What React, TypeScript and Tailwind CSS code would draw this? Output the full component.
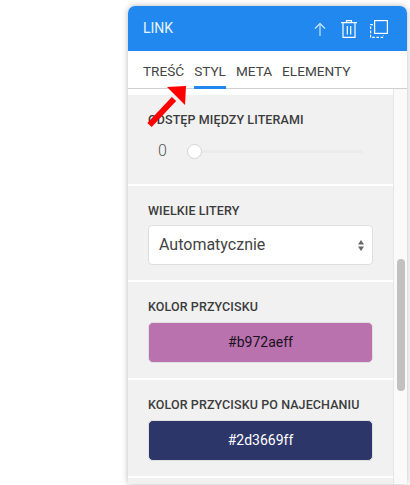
const labelClass = "text-[12.5px] leading-[14px] font-medium text-[#3c3c3c] tracking-[0.1px]";

function ArrowAnnotation() {
    return (
        <svg className="absolute left-[144px] top-[84px]" width="46" height="46" viewBox="0 0 46 46">
            <path d="M5.5 41 L30 15" stroke="#ff0000" strokeWidth="6" fill="none" />
            <polygon points="23,3 42,2 41,21" fill="#ff0000" />
        </svg>
    );
}

function HeaderIcons() {
    return (
        <div className="flex items-center">
            <svg width="12" height="14" viewBox="0 0 12 14" className="mr-[15px] mt-[1px]" fill="none" stroke="#cfe4fb" strokeWidth="1.2">
                <path d="M6 14 V1.5" />
                <path d="M1 6.5 L6 1.5 L11 6.5" />
            </svg>
            <svg width="16" height="18" viewBox="0 0 16 18" className="mr-[13px]" fill="none" stroke="#fff" strokeWidth="1.2">
                <path d="M0 2.6 H16" />
                <path d="M5.5 2.5 V0.7 H10.5 V2.5" />
                <path d="M2 2.6 V17.4 H14 V2.6" />
                <path d="M6.3 6 V14.5" />
                <path d="M9.7 6 V14.5" />
            </svg>
            <svg width="18" height="18" viewBox="0 0 18 18" fill="none" stroke="#fff" strokeWidth="1.2">
                <rect x="4.6" y="0.6" width="12.8" height="12.8" />
                <path d="M3 4.6 H0.6 V17.4 H13.4 V15.5" strokeDasharray="2.6 1.6" />
            </svg>
        </div>
    );
}

function ColorField({ label, hex, bg, text }: { label: string; hex: string; bg: string; text: string }) {
    return (
        <section className="h-[98px] border-b-2 border-white px-[20px] pt-[18px]">
            <div className={labelClass}>{label}</div>
            <div className={`mt-[8px] flex h-[41px] w-[225px] items-center justify-center rounded-[5px] border border-[#e0e0e0] text-[14px] ${bg} ${text}`}>
                {hex}
            </div>
        </section>
    );
}

export default function App() {
    return (
        <div className="relative h-[485px] w-[410px] overflow-hidden bg-white font-['Roboto',sans-serif]">
            <div className="ml-[128px] mt-[6px] w-[279px] overflow-hidden rounded-t-[7px] bg-white shadow-[0_0_6px_rgba(0,0,0,0.28)]">
                <header className="flex h-[45px] items-center justify-between bg-[#2088ef] pl-[15px] pr-[19px]">
                    <span className="text-[14px] text-white/90">LINK</span>
                    <HeaderIcons />
                </header>
                <nav className="flex h-[38px] items-end gap-[10px] border-b border-[#cfcfcf] pl-[15px] text-[13.6px] text-[#444]">
                    <span className="pb-[7px]">TREŚĆ</span>
                    <span className="-mb-px border-b-[3px] border-[#2088ef] pb-[5px]">STYL</span>
                    <span className="pb-[7px]">META</span>
                    <span className="pb-[7px]">ELEMENTY</span>
                </nav>
                <div className="flex h-[395px]">
                    <main className="w-[265px] pt-[6px]">
                        <div className="h-[390px] bg-[#f1f1f1]">
                            <section className="h-[91px] border-b-2 border-white px-[20px] pt-[18px]">
                                <div className={labelClass}>ODSTĘP MIĘDZY LITERAMI</div>
                                <div className="mt-[14px] flex items-center">
                                    <span className="ml-[10px] w-[18px] text-[16px] leading-[20px] font-light text-[#555]">0</span>
                                    <div className="relative ml-[11px] h-[3px] w-[176px] rounded-full bg-[#ebebeb]">
                                        <div className="absolute left-0 top-[-6px] h-[15px] w-[15px] rounded-full border border-[#d4d4d4] bg-white" />
                                    </div>
                                </div>
                            </section>
                            <section className="h-[96px] border-b-2 border-white px-[20px] pt-[18px]">
                                <div className={labelClass}>WIELKIE LITERY</div>
                                <div className="mt-[7px] flex h-[40px] w-[225px] items-center justify-between rounded-[4px] border border-[#dedede] bg-white pl-[10px] pr-[8px] text-[16px] text-[#444]">
                                    <span>Automatycznie</span>
                                    <svg width="6" height="11" viewBox="0 0 6 11" fill="#666">
                                        <path d="M3 0 L6 4.5 H0 Z" />
                                        <path d="M3 11 L0 6.5 H6 Z" />
                                    </svg>
                                </div>
                            </section>
                            <ColorField label="KOLOR PRZYCISKU" hex="#b972aeff" bg="bg-[#b972ae]" text="text-[#1a1020]" />
                            <ColorField label="KOLOR PRZYCISKU PO NAJECHANIU" hex="#2d3669ff" bg="bg-[#2d3669]" text="text-white" />
                        </div>
                    </main>
                    <aside className="w-[14px] border-l border-[#e6e6e6] bg-[#fafafa] pl-[3px] pt-[170px]">
                        <div className="h-[132px] w-[8px] rounded-full bg-[#c1c1c1]" />
                    </aside>
                </div>
            </div>
            <ArrowAnnotation />
        </div>
    );
}
